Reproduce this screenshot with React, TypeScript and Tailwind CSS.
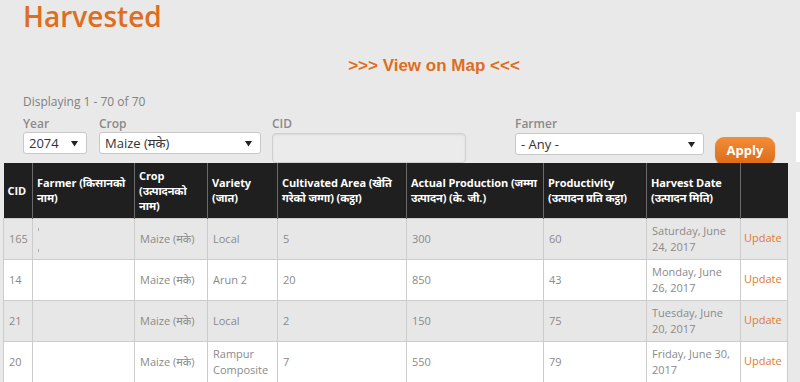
import React from "react";

const font = { fontFamily: '"Open Sans", "Noto Sans", sans-serif' };

function FakeSelect({ w, value }: { w: string; value: string }) {
  return (
    <div
      className={`${w} h-[22px] bg-white border border-[#c8c8c8] rounded-[3px] flex items-center justify-between pl-[5px] pr-[8px] text-[13px] text-[#333]`}
    >
      <span className="leading-none">{value}</span>
      <svg width="7" height="7" viewBox="0 0 7 7">
        <path d="M0 1 L7 1 L3.5 6.5 Z" fill="#222" />
      </svg>
    </div>
  );
}

const rows = [
  { cid: "165", variety: ["Local"], area: "5", prod: "300", pr: "60", date: ["Saturday, June", "24, 2017"], marks: true },
  { cid: "14", variety: ["Arun 2"], area: "20", prod: "850", pr: "43", date: ["Monday, June", "26, 2017"] },
  { cid: "21", variety: ["Local"], area: "2", prod: "150", pr: "75", date: ["Tuesday, June", "20, 2017"] },
  { cid: "20", variety: ["Rampur", "Composite"], area: "7", prod: "550", pr: "79", date: ["Friday, June 30,", "2017"] },
];

const headers: string[][] = [
  ["CID"],
  ["Farmer (किसानको", "नाम)"],
  ["Crop", "(उत्पादनको", "नाम)"],
  ["Variety", "(जात)"],
  ["Cultivated Area (खेति", "गरेको जग्गा) (कट्ठा)"],
  ["Actual Production (जम्मा", "उत्पादन) (के. जी.)"],
  ["Productivity", "(उत्पादन प्रति कट्ठा)"],
  ["Harvest Date", "(उत्पादन मिति)"],
  [],
];

export default function App() {
  return (
    <div className="w-[800px] h-[382px] overflow-hidden bg-[#e9e9e9] relative" style={font}>
      <div className="absolute right-0 top-[112px] w-[4px] h-[50px] bg-white" />
      <div className="pl-[23px]">
        <h1 className="text-[28px] leading-[38px] -mt-[3px] font-semibold text-[#df6d1e]">Harvested</h1>
        <div
          className="text-center text-[17px] font-bold text-[#df6d1e] mt-[21px] leading-[20px] pl-[45px]"
          style={{ fontFamily: '"Liberation Sans", Arial, sans-serif' }}
        >
          &gt;&gt;&gt; View on Map &lt;&lt;&lt;
        </div>
        <div className="text-[12px] text-[#808080] mt-[18px] leading-[15px]">Displaying 1 - 70 of 70</div>
        <div className="flex mt-[7px] h-[47px]">
          <div className="w-[76px]">
            <div className="text-[12px] font-semibold text-[#8a8a8a] leading-[15px] mb-[1px]">Year</div>
            <FakeSelect w="w-[64px]" value="2074" />
          </div>
          <div className="w-[173px]">
            <div className="text-[12px] font-semibold text-[#8a8a8a] leading-[15px] mb-[1px]">Crop</div>
            <FakeSelect w="w-[162px]" value="Maize (मके)" />
          </div>
          <div className="w-[243px]">
            <div className="text-[12px] font-semibold text-[#8a8a8a] leading-[15px] mb-[2px]">CID</div>
            <div className="w-[194px] h-[30px] bg-[#ebebeb] border border-[#cfcfcf] rounded-[4px] shadow-[inset_0_1px_2px_rgba(0,0,0,0.08)]" />
          </div>
          <div className="w-[200px]">
            <div className="text-[12px] font-semibold text-[#8a8a8a] leading-[15px] mb-[2px]">Farmer</div>
            <FakeSelect w="w-[189px]" value="- Any -" />
          </div>
          <div className="pt-[21px]">
            <div className="w-[60px] h-[28px] rounded-[9px] bg-gradient-to-b from-[#f28e38] to-[#dc6a14] text-white font-bold text-[13px] flex items-center justify-center shadow-[0_1px_1px_rgba(0,0,0,0.2)]">
              Apply
            </div>
          </div>
        </div>
      </div>
      <div className="pl-[3px] relative z-10">
        <table className="table-fixed border-collapse w-[784px]">
          <colgroup>
            <col className="w-[29px]" />
            <col className="w-[102px]" />
            <col className="w-[73px]" />
            <col className="w-[70px]" />
            <col className="w-[129px]" />
            <col className="w-[137px]" />
            <col className="w-[103px]" />
            <col className="w-[94px]" />
            <col className="w-[47px]" />
          </colgroup>
          <thead>
            <tr className="h-[55px] bg-[#1f1f1f]">
              {headers.map((h, i) => (
                <th
                  key={i}
                  className="text-left align-middle text-white font-bold text-[11px] tracking-[-0.1px] leading-[15px] px-[4px] border-l border-[#6a6a6a] first:border-l-0 whitespace-nowrap overflow-hidden"
                >
                  {h.map((l, k) => (
                    <div key={k}>{l}</div>
                  ))}
                </th>
              ))}
            </tr>
          </thead>
          <tbody>
            {rows.map((r, i) => (
              <tr key={i} className={`h-[41px] ${i % 2 === 0 ? "bg-[#e7e7e7]" : "bg-white"}`}>
                {[
                  r.cid,
                  "",
                  "Maize (मके)",
                  r.variety,
                  r.area,
                  r.prod,
                  r.pr,
                  r.date,
                ].map((c, j) => (
                  <td
                    key={j}
                    className="border border-[#cccccc] px-[5px] align-middle text-[11px] leading-[16px] text-[#8a8a8a] relative"
                  >
                    {Array.isArray(c) ? c.map((l, k) => <div key={k}>{l}</div>) : c}
                    {j === 1 && r.marks ? (
                      <>
                        <span className="absolute left-[5px] top-[9px] w-[1px] h-[3px] bg-[#b0b0b0]" />
                        <span className="absolute left-[5px] top-[30px] w-[1px] h-[3px] bg-[#b0b0b0]" />
                      </>
                    ) : null}
                  </td>
                ))}
                <td className="border border-[#cccccc] px-[3px] align-middle text-[11px] text-[#e07a30]">Update</td>
              </tr>
            ))}
          </tbody>
        </table>
      </div>
    </div>
  );
}
